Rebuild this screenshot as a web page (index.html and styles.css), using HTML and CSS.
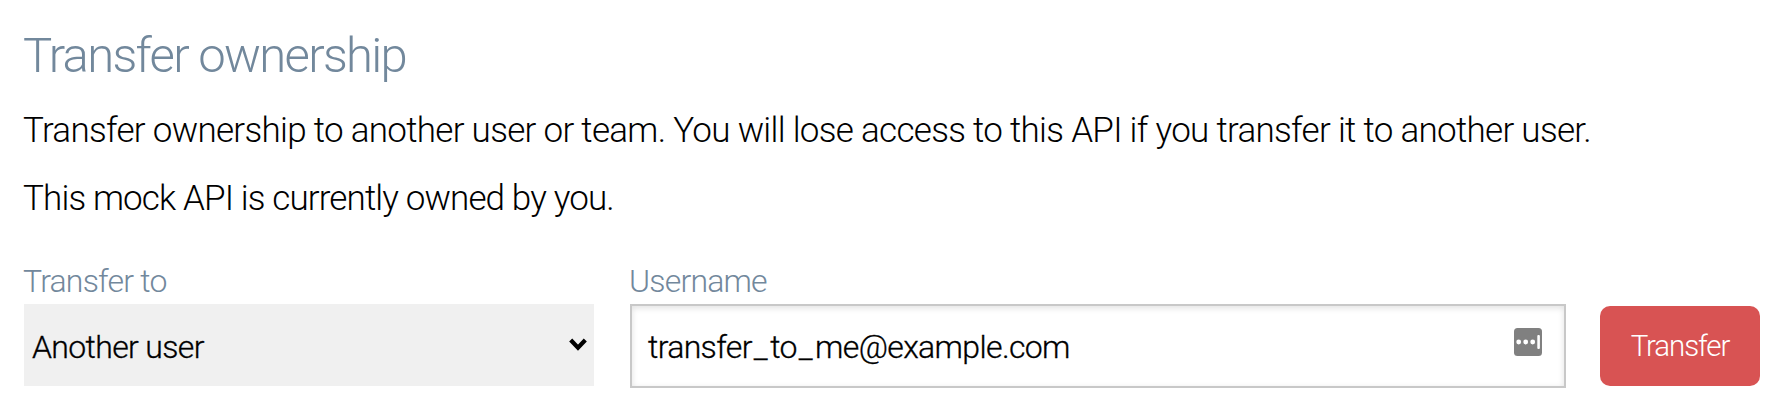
FILE: index.html
```html
<!DOCTYPE html>
<html lang="en">
<head>
<meta charset="utf-8">
<title>Transfer ownership</title>
<link rel="stylesheet" href="styles.css">
</head>
<body>
<section class="transfer">
  <h2 class="title">Transfer ownership</h2>
  <p class="text">Transfer ownership to another user or team. You will lose access to this API if you transfer it to another user.</p>
  <p class="text text-owner">This mock API is currently owned by you.</p>
  <form class="form">
    <div class="field field-target">
      <span class="label">Transfer to</span>
      <div class="select"><span class="value">Another user</span>
        <svg class="chevron" width="18" height="13" viewBox="0 0 18 13"><path d="M1.700 2 9 9.800 16.300 2" fill="none" stroke="#000" stroke-width="4.200"/></svg>
      </div>
    </div>
    <div class="field field-user">
      <span class="label">Username</span>
      <div class="input"><span class="value">transfer<span class="underscore">_</span>to<span class="underscore">_</span>me@example.com</span>
        <svg class="autofill" width="28" height="28" viewBox="0 0 28 28"><rect width="28" height="28" rx="3.500" fill="#808080"/><g fill="#fff"><circle cx="4.700" cy="14" r="2.400"/><circle cx="11.700" cy="14" r="2.400"/><circle cx="18.700" cy="14" r="2.400"/><rect x="23.300" y="7" width="2.600" height="14" rx="1"/></g></svg>
      </div>
    </div>
    <button class="button" type="button">Transfer</button>
  </form>
</section>
</body>
</html>
```
FILE: styles.css
```css
* { box-sizing: border-box; }
body { margin: 0; background: #fff; color: #000; font-family: Roboto, sans-serif; font-weight: 300; }
.transfer { padding: 24px 26px 0 23px; }
.title { margin: 0 0 9px; font-size: 49px; line-height: 64px; font-weight: 300; letter-spacing: -1.7px; color: #72889c; }
.text { margin: 0; font-size: 35px; line-height: 68px; letter-spacing: -0.7px; white-space: nowrap; }
.text-owner { letter-spacing: -0.87px; }
.form { display: flex; align-items: flex-start; margin: 28px 0 0 1px; }
.field { display: flex; flex-direction: column; }
.field-target { width: 570px; margin-right: 36px; }
.field-user { width: 936px; margin-right: 34px; }
.label { margin: 0 0 3px -1px; font-size: 32px; line-height: 40px; letter-spacing: -0.8px; color: #72889c; }
.select, .input { display: flex; justify-content: space-between; font-size: 32px; -webkit-text-stroke: 0.3px #000; }
.value { line-height: 40px; letter-spacing: -0.65px; }
.select { height: 82px; padding: 23px 7px 0 8px; background: #f0f0f0; }
.input { height: 84px; padding: 21px 22px 0 16px; border: 2px solid #c8c8c8; box-shadow: inset 0 2px 6px rgba(0, 0, 0, 0.12); }
.underscore { margin-left: 2px; letter-spacing: 2.5px; }
.chevron { margin-top: 11px; }
.autofill { margin-top: 1px; }
.button { width: 160px; height: 80px; margin-top: 45px; padding: 0; border: 0; border-radius: 10px; background: #d85353; color: #fff; font-family: Roboto, sans-serif; font-size: 29.5px; font-weight: 300; letter-spacing: -1.1px; }
```
